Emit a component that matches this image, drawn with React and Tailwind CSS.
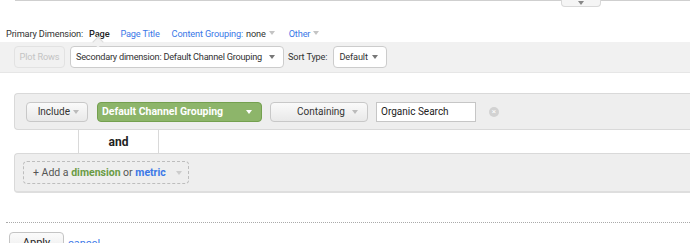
import React from 'react';

const Caret = ({ className = '' }) => (
  <span className={`inline-block w-0 h-0 border-l-[3.5px] border-r-[3.5px] border-t-[4px] border-l-transparent border-r-transparent ${className}`} />
);

const App = () => {
  return (
    <div className="w-[690px] h-[243px] overflow-hidden bg-white text-[10px] text-[#333]" style={{ fontFamily: 'Roboto, "Liberation Sans", sans-serif' }}>
      {/* top rule with tab */}
      <div className="ml-[15px] h-px bg-[#cfcfcf] relative">
        <div className="absolute left-[546px] top-0 w-[40px] h-[7px] bg-[#f5f5f5] border border-t-0 border-[#d8d8d8] rounded-b-sm flex items-center justify-center">
          <Caret className="border-t-[#888]" />
        </div>
      </div>

      {/* primary dimension */}
      <div className="flex items-end h-[41px] pl-[6px] pb-[4px] text-[9.2px] leading-none tracking-[-0.15px] whitespace-nowrap">
        <span className="text-[#333]">Primary Dimension:</span>
        <span className="ml-[6px] font-medium text-[#222]">Page</span>
        <span className="ml-[11px] text-[#3b78e7]">Page Title</span>
        <span className="ml-[12px] flex items-center gap-[3px]">
          <span className="text-[#3b78e7]">Content Grouping:</span>
          <span>none</span>
          <Caret className="border-t-[#c4c4c4]" />
        </span>
        <span className="ml-[14px] flex items-center gap-[3px]">
          <span className="text-[#3b78e7]">Other</span>
          <Caret className="border-t-[#c4c4c4]" />
        </span>
      </div>

      {/* secondary bar */}
      <div className="relative h-[31px] bg-[#f1f1f1] border-b border-[#e6e6e6] flex items-center pl-[14px] text-[9.2px] tracking-[-0.15px] whitespace-nowrap">
        <div className="absolute left-[94px] -top-[4px] w-[8px] h-[8px] bg-[#f1f1f1] rotate-45 border-l border-t border-[#dcdcdc]" />
        <div className="h-[22px] w-[51px] border border-[#e2e2e2] rounded-sm flex items-center justify-center text-[#c4c4c4]">Plot Rows</div>
        <div className="ml-[5px] h-[22px] w-[214px] bg-white border border-[#cccccc] rounded-sm flex items-center justify-between pl-[5px] pr-[8px]">
          <span className="tracking-[-0.25px]">Secondary dimension: Default Channel Grouping</span>
          <Caret className="border-t-[#777]" />
        </div>
        <span className="ml-[4px]">Sort Type:</span>
        <div className="ml-[6px] h-[22px] w-[54px] bg-white border border-[#cccccc] rounded-sm flex items-center justify-between pl-[5px] pr-[8px]">
          <span>Default</span>
          <Caret className="border-t-[#777]" />
        </div>
      </div>

      {/* filter area */}
      <div className="mt-[20px] ml-[14px] h-[37px] bg-[#eeeeee] border border-r-0 border-[#d9d9d9] rounded-l-[4px] flex items-center pl-[11px]">
        <div className="h-[20px] w-[62px] border border-[#c8c8c8] rounded-sm bg-gradient-to-b from-[#fafafa] to-[#e9e9e9] flex items-center justify-end pr-[8px] gap-[3px]">
          <span>Include</span>
          <Caret className="border-t-[#bbb]" />
        </div>
        <div className="ml-[9px] h-[20px] w-[165px] bg-[#8db56a] border border-[#74a04f] rounded-sm flex items-center justify-between pl-[4px] pr-[9px] text-white font-bold text-[10.5px]">
          <span>Default Channel Grouping</span>
          <Caret className="border-t-white" />
        </div>
        <div className="ml-[8px] h-[20px] w-[98px] border border-[#c8c8c8] rounded-sm bg-gradient-to-b from-[#fafafa] to-[#e9e9e9] flex items-center justify-between pl-[26px] pr-[9px]">
          <span>Containing</span>
          <Caret className="border-t-[#bbb]" />
        </div>
        <div className="ml-[8px] h-[20px] w-[100px] bg-white border border-[#c6c6c6] flex items-center px-[4px] text-[#222]">Organic Search</div>
        <div className="ml-[13px] w-[10px] h-[10px] rounded-full bg-[#d2d2d2] flex items-center justify-center text-white text-[8px] leading-none">×</div>
      </div>

      <div className="flex h-[23px]">
        <div className="w-[79px] border-r border-[#d9d9d9]" />
        <div className="w-[79px] flex items-center justify-center font-bold text-[12px] text-[#222]">and</div>
        <div className="flex-1 border-l border-[#d9d9d9]" />
      </div>

      <div className="ml-[14px] h-[40px] bg-[#eeeeee] border border-r-0 border-b-2 border-[#d9d9d9] border-b-[#dedede] rounded-l-[4px] pl-[8px] pt-[7px]">
        <div className="h-[23px] w-[166px] border border-dashed border-[#bdbdbd] rounded-sm flex items-center justify-between pl-[9px] pr-[6px] text-[10.5px]">
          <span className="text-[#555]">
            + Add a <span className="font-bold text-[#6a9b45]">dimension</span> or <span className="font-bold text-[#3b78e7]">metric</span>
          </span>
          <Caret className="border-t-[#ccc]" />
        </div>
      </div>

      <div className="mt-[29px] ml-[6px] border-t border-dotted border-[#aaaaaa]" />

      <div className="mt-[9px] ml-[9px] flex items-start gap-[4px] text-[11px]">
        <div className="h-[22px] w-[55px] border border-[#c4c4c4] rounded-sm bg-gradient-to-b from-[#fbfbfb] to-[#ececec] flex items-center justify-center text-[#222]">Apply</div>
        <span className="mt-[4px] text-[#3b78e7]">cancel</span>
      </div>
    </div>
  );
};

export default App;
